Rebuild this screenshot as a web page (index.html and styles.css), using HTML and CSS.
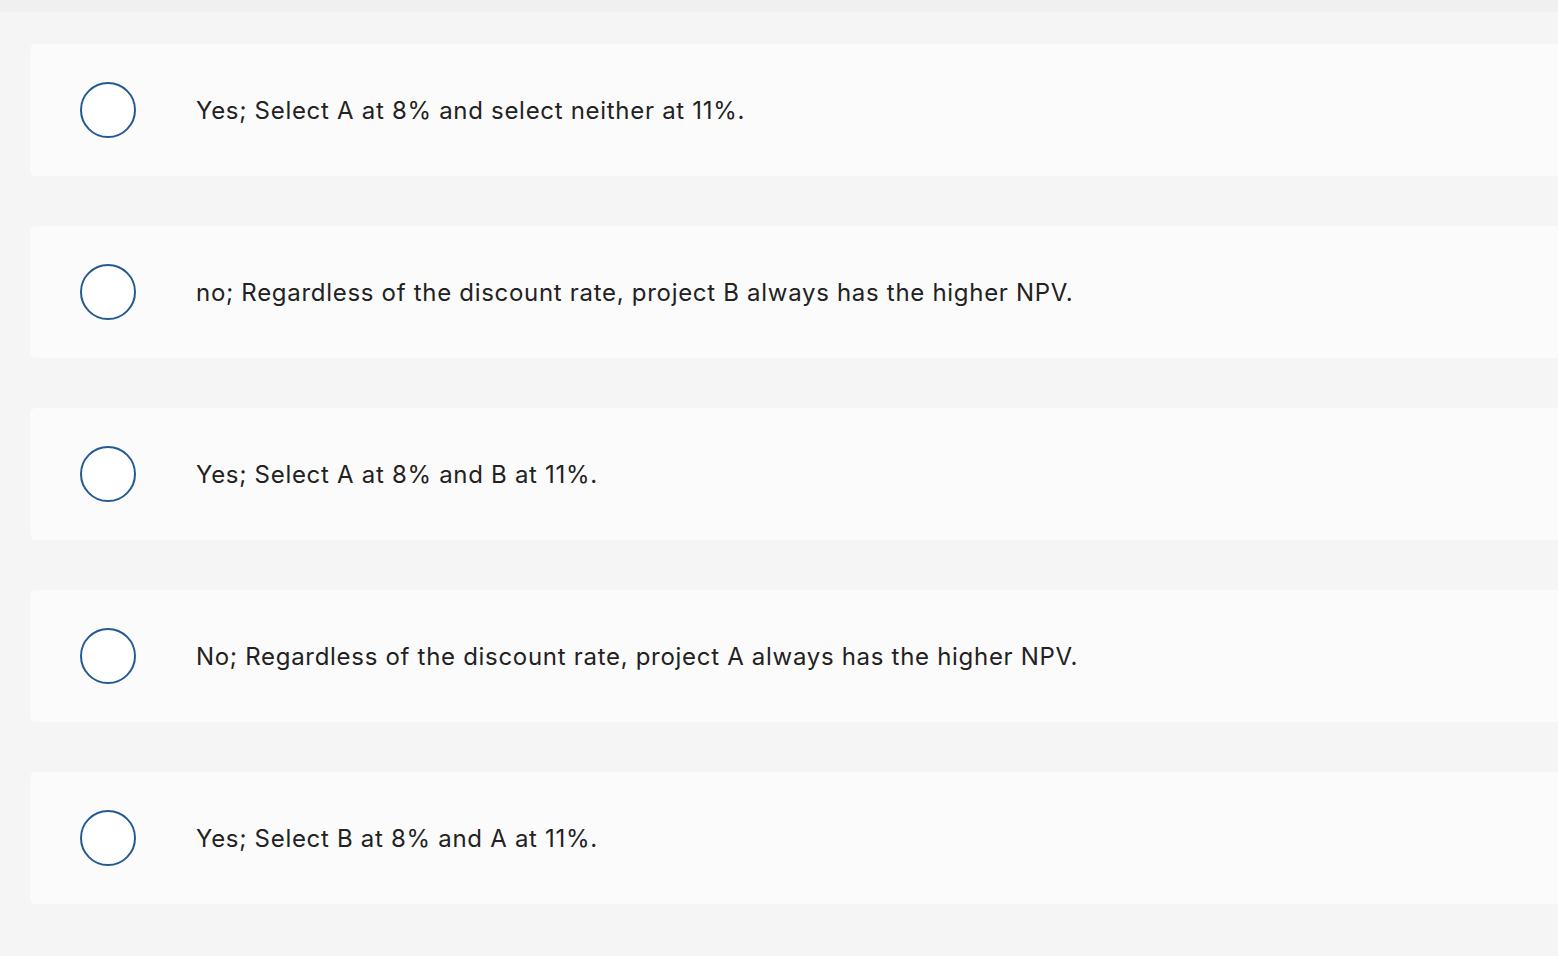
FILE: index.html
```html
<!DOCTYPE html>
<html>
<head>
<meta charset="utf-8">
<link rel="stylesheet" href="styles.css">
</head>
<body>
<div class="topbar"></div>
<div class="list">
  <div class="card"><span class="radio"></span><span class="label">Yes; Select A at 8% and select neither at 11%.</span></div>
  <div class="card"><span class="radio"></span><span class="label">no; Regardless of the discount rate, project B always has the higher NPV.</span></div>
  <div class="card"><span class="radio"></span><span class="label">Yes; Select A at 8% and B at 11%.</span></div>
  <div class="card"><span class="radio"></span><span class="label">No; Regardless of the discount rate, project A always has the higher NPV.</span></div>
  <div class="card"><span class="radio"></span><span class="label">Yes; Select B at 8% and A at 11%.</span></div>
</div>
</body>
</html>
```
FILE: styles.css
```css
html, body {
  margin: 0;
  padding: 0;
  background: #f5f5f5;
  overflow: hidden;
  width: 1558px;
  height: 956px;
}
.topbar {
  height: 12px;
  background: #f0f0f0;
}
.list {
  display: flex;
  flex-direction: column;
  gap: 50px;
  padding: 32px 0 0 30px;
}
.card {
  width: 1560px;
  height: 132px;
  box-sizing: border-box;
  background: #fbfbfb;
  border-radius: 6px;
  display: flex;
  align-items: center;
  padding-left: 50px;
}
.radio {
  width: 56px;
  height: 56px;
  box-sizing: border-box;
  border: 2px solid #245b92;
  border-radius: 50%;
  background: #fff;
  flex: none;
}
.label {
  margin-left: 60px;
  font-family: "Inter", "Liberation Sans", sans-serif;
  font-size: 24px;
  letter-spacing: 0.7px;
  color: #222;
}
```
